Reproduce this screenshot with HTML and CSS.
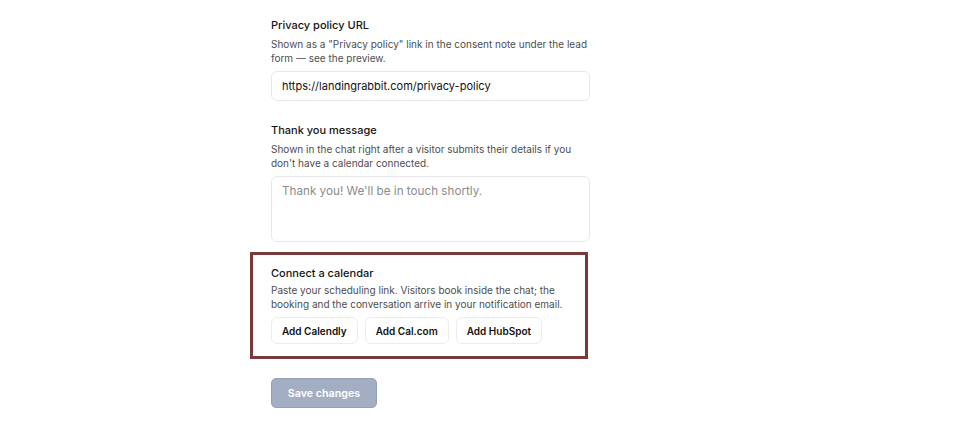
FILE: index.html
```html
<html>
<head>
  <title>Lead form settings</title>
  <link rel="stylesheet" href="styles.css">
</head>
<body>

<div class="settings">
  <div class="field">
    <label class="field-title" for="privacy-url">Privacy policy URL</label>
    <p class="field-desc">Shown as a "Privacy policy" link in the consent note under the lead form — see the preview.</p>
    <input type="text" id="privacy-url" class="text-input" value="https://landingrabbit.com/privacy-policy" />
  </div>

  <div class="field">
    <label class="field-title" for="thanks">Thank you message</label>
    <p class="field-desc">Shown in the chat right after a visitor submits their details if you don't have a calendar connected.</p>
    <textarea id="thanks" class="text-area" placeholder="Thank you! We'll be in touch shortly."></textarea>
  </div>

  <div class="calendar-box">
    <div class="field-title">Connect a calendar</div>
    <p class="field-desc">Paste your scheduling link. Visitors book inside the chat; the booking and the conversation arrive in your notification email.</p>
    <div class="calendar-buttons">
      <button class="cal-btn">Add Calendly</button>
      <button class="cal-btn">Add Cal.com</button>
      <button class="cal-btn">Add HubSpot</button>
    </div>
  </div>

  <button class="save-btn" disabled>Save changes</button>
</div>

</body>
</html>
```

FILE: styles.css
```css
* {
  box-sizing: border-box;
}

body {
  margin: 0;
  background: #fff;
  color: #111827;
  font-family: Inter, 'Noto Sans', sans-serif;
}

.settings {
  width: 590px;
  padding: 17px 0 0 271px;
  display: flex;
  flex-direction: column;
}

.field {
  display: flex;
  flex-direction: column;
  margin-bottom: 21px;
}

.field:nth-child(2) {
  margin-bottom: 10px;
}

.field-title {
  font-size: 11px;
  line-height: 16px;
  font-weight: 500;
  color: #151515;
}

.field-desc {
  margin: 4px 0 0;
  font-size: 10px;
  line-height: 14px;
  color: #4d4d4d;
}

.text-input,
.text-area {
  margin-top: 6px;
  width: 100%;
  border: 1px solid #e8e8ea;
  border-radius: 6px;
  font-family: inherit;
  font-size: 11px;
  color: #111;
  padding: 0 10px;
  background: #fff;
}

.text-input {
  height: 30px;
}

.text-area {
  height: 66px;
  padding-top: 7px;
  resize: none;
  font-size: 11.7px;
  line-height: 15px;
}

.text-area::placeholder {
  color: #8a8a8f;
}

.calendar-box {
  margin-left: -21px;
  width: 338px;
  border: 3px solid #7a3a3a;
  padding: 10px 10px 12px 18px;
}

.calendar-box .field-desc {
  margin-top: 2px;
}

.calendar-buttons {
  display: flex;
  gap: 7px;
  margin-top: 6px;
}

.cal-btn {
  height: 27px;
  padding: 0 10px;
  border: 1px solid #ececee;
  border-radius: 6px;
  background: #fff;
  font-family: inherit;
  font-size: 10px;
  font-weight: 600;
  color: #111;
}

.save-btn {
  align-self: flex-start;
  margin-top: 19px;
  width: 106px;
  height: 30px;
  border: 1px solid #96a0b5;
  border-radius: 5px;
  background: #a4aec2;
  color: #fff;
  font-family: inherit;
  font-size: 10.7px;
  font-weight: 600;
}
```
